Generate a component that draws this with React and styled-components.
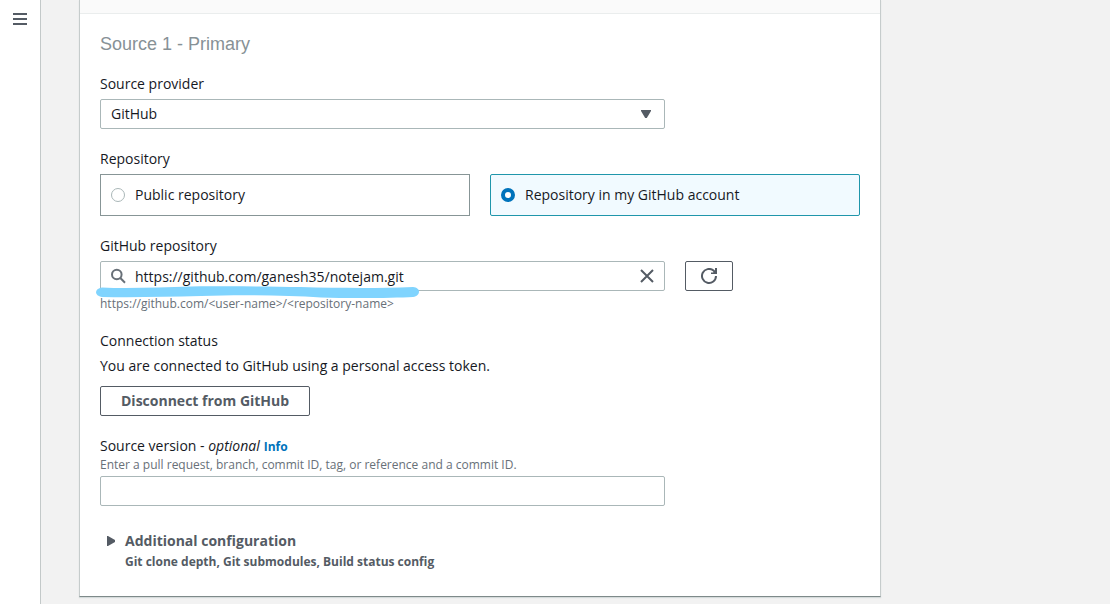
import React, { useState } from "react";
import styled, { createGlobalStyle } from "styled-components";

const GlobalStyle = createGlobalStyle`
  * { box-sizing: border-box; }
  body {
    margin: 0;
    background: #f2f2f2;
    color: #16191f;
    font: 14px/22px "Open Sans", "Noto Sans", sans-serif;
  }
  button, input, select { font: inherit; color: inherit; margin: 0; }
`;

const Page = styled.div`
  display: flex;
  min-height: 100vh;
`;

const SideRail = styled.nav`
  flex: 0 0 41px;
  display: flex;
  align-items: flex-start;
  justify-content: center;
  padding-top: 8px;
  background: #fff;
  border-right: 1px solid #c3c9c9;
`;

const IconButton = styled.button`
  display: flex;
  align-items: center;
  justify-content: center;
  width: 22px;
  height: 22px;
  padding: 0;
  border: 0;
  background: none;
  color: #545b64;
  cursor: pointer;
`;

const Main = styled.main`
  flex: 1;
  min-width: 0;
  padding: 0 38px 7px;
`;

const Panel = styled.section`
  max-width: 802px;
  background: #fff;
  border: 1px solid #c6cccc;
  border-top: 0;
  border-bottom-color: #7e8a8a;
  box-shadow: 0 1px 1px #d5dbdb;
`;

const PanelHeader = styled.header`
  height: 14px;
  background: #fafafa;
  border-bottom: 1px solid #eaeded;
`;

const Form = styled.form`
  padding: 19px 20px 24px;
`;

const Title = styled.h2`
  margin: 0 0 18px;
  font: 400 18px/22px "Liberation Sans", Arial, sans-serif;
  color: #879196;
`;

const Field = styled.div`
  margin-bottom: ${(p) => p.$gap || 19}px;
`;

const FieldSet = styled.fieldset`
  min-width: 0;
  margin: 0 0 19px;
  padding: 0;
  border: 0;
`;

const LabelRow = styled.div`
  display: flex;
  align-items: baseline;
  gap: 4px;
  height: 22px;
`;

const Label = styled.label`
  display: inline-block;
  vertical-align: top;
`;

const Legend = styled.legend`
  padding: 0;
`;

const Text = styled.p`
  margin: 0;
  padding-bottom: ${(p) => p.$gap || 0}px;
`;

const Hint = styled.div`
  padding-top: ${(p) => p.$top || 0}px;
  font-size: 12px;
  line-height: 16px;
  color: #687078;
`;

const Columns = styled.div`
  display: grid;
  grid-template-columns: repeat(4, minmax(0, 1fr));
  gap: 20px;
  padding-top: ${(p) => p.$top || 0}px;
`;

const Control = styled.div`
  grid-column: span 3;
  position: relative;
  display: flex;
  align-items: center;
  height: 30px;
  padding: 0 6px 0 10px;
  background: #fff;
  border: 1px solid #aab7b8;
  border-radius: 2px;
  color: #545b64;
`;

const Select = styled.select`
  position: absolute;
  inset: 0;
  width: 100%;
  padding: 0 40px 0 10px;
  appearance: none;
  border: 0;
  background: none;
  color: #16191f;
`;

const SelectArrow = styled.svg`
  margin-left: auto;
  margin-right: 6px;
`;

const TextInput = styled.input`
  flex: 1;
  min-width: 0;
  height: 28px;
  padding: 0 ${(p) => (p.$icon ? 8 : 0)}px;
  border: 0;
  outline: 0;
  background: none;
  color: #16191f;
`;

const Marker = styled.svg`
  position: absolute;
  left: -5px;
  top: 24px;
  pointer-events: none;
`;

const Tiles = styled.div`
  display: grid;
  grid-template-columns: 1fr 1fr;
  gap: 20px;
  padding-top: 4px;
`;

const Tile = styled.label`
  display: flex;
  align-items: center;
  gap: 10px;
  height: 42px;
  padding: 0 10px;
  border: 1px solid ${(p) => (p.$selected ? "#1f96ab" : "#879596")};
  border-radius: ${(p) => (p.$selected ? 2 : 0)}px;
  background: ${(p) => (p.$selected ? "#f1faff" : "#fff")};
`;

const Radio = styled.input`
  appearance: none;
  width: 14px;
  height: 14px;
  border: 1px solid #aab7b8;
  border-radius: 50%;
  background: #fff;
  &:checked { border: 4px solid #0073bb; }
`;

const Button = styled.button`
  display: inline-flex;
  align-items: center;
  justify-content: center;
  justify-self: start;
  height: 30px;
  padding: 0 ${(p) => (p.$icon ? 15 : 20)}px;
  border: 1px solid #545b64;
  border-radius: 2px;
  background: #fff;
  color: #545b64;
  font-weight: 700;
  cursor: pointer;
`;

const InfoLink = styled.a`
  font-size: 12px;
  font-weight: 700;
  color: #0073bb;
  text-decoration: none;
`;

const Expander = styled.button`
  display: grid;
  grid-template-columns: 18px auto;
  align-items: center;
  padding: 0 0 0 7px;
  border: 0;
  background: none;
  color: #545b64;
  font-weight: 700;
  text-align: left;
  cursor: pointer;
`;

const ExpanderNote = styled.span`
  grid-column: 2;
  font-size: 12px;
  line-height: 20px;
`;

export default function App() {
  const [kind, setKind] = useState("mine");
  const [url, setUrl] = useState("https://github.com/ganesh35/notejam.git");

  return (
    <Page>
      <GlobalStyle />
      <SideRail aria-label="Main">
        <IconButton type="button" aria-label="Open navigation">
          <svg width="14" height="12" viewBox="0 0 14 12" fill="currentColor">
            <path d="M0 0h14v2H0zM0 5h14v2H0zM0 10h14v2H0z" />
          </svg>
        </IconButton>
      </SideRail>
      <Main>
        <Panel>
          <PanelHeader />
          <Form onSubmit={(e) => e.preventDefault()}>
            <Title>Source 1 - Primary</Title>

            <Field>
              <Label htmlFor="provider">Source provider</Label>
              <Columns $top={4}>
                <Control>
                  <Select id="provider">
                    <option>GitHub</option>
                  </Select>
                  <SelectArrow width="12" height="8" viewBox="0 0 12 8" fill="currentColor">
                    <path d="M1 0h10v1L6.8 8H5.2L1 1z" />
                  </SelectArrow>
                </Control>
              </Columns>
            </Field>

            <FieldSet>
              <Legend>Repository</Legend>
              <Tiles>
                <Tile $selected={kind === "public"}>
                  <Radio type="radio" name="kind" checked={kind === "public"} onChange={() => setKind("public")} />
                  Public repository
                </Tile>
                <Tile $selected={kind === "mine"}>
                  <Radio type="radio" name="kind" checked={kind === "mine"} onChange={() => setKind("mine")} />
                  Repository in my GitHub account
                </Tile>
              </Tiles>
            </FieldSet>

            <Field $gap={18}>
              <Label htmlFor="repo">GitHub repository</Label>
              <Columns $top={4}>
                <Control>
                  <svg width="16" height="16" viewBox="0 0 16 16" fill="none" stroke="#687078" strokeWidth="2">
                    <circle cx="5.800" cy="6.500" r="4.800" />
                    <path d="M9.300 10l4.700 4.700" />
                  </svg>
                  <TextInput id="repo" $icon value={url} onChange={(e) => setUrl(e.target.value)} />
                  <IconButton type="button" aria-label="Clear" onClick={() => setUrl("")}>
                    <svg width="14" height="14" viewBox="0 0 14 14" fill="none" stroke="currentColor" strokeWidth="2">
                      <path d="M1 1l12 12M13 1L1 13" />
                    </svg>
                  </IconButton>
                  <Marker width="324" height="13" viewBox="0 0 324 13" fill="#80d4fe">
                    <path d="M6 1.5C35 3 65 1 95 .5C140 0 175 .5 205 1C240 2 280 2.5 317 1C325 1.500 325 10 317 11C300 12 255 12.500 225 11.500C190 9.500 150 8.500 105 10C70 11 35 11.500 6 11C-2 10 -2 2.500 6 1.500z" />
                  </Marker>
                </Control>
                <Button type="button" $icon aria-label="Refresh">
                  <svg width="16" height="16" viewBox="0 0 16 16" fill="none" stroke="currentColor" strokeWidth="2">
                    <path d="M15 8a7 7 0 1 1-2.500-5.400L14 4" />
                    <path d="M16 0v6h-6V4.500h2L14 3V0z" fill="currentColor" stroke="none" />
                  </svg>
                </Button>
              </Columns>
              <Hint $top={5}>https://github.com/&lt;user-name&gt;/&lt;repository-name&gt;</Hint>
            </Field>

            <Field>
              <Text $gap={3}>Connection status</Text>
              <Text $gap={9}>You are connected to GitHub using a personal access token.</Text>
              <Button type="button">Disconnect from GitHub</Button>
            </Field>

            <Field $gap={24}>
              <LabelRow>
                <Label htmlFor="version">
                  Source version - <i>optional</i>
                </Label>
                <InfoLink href="#info">Info</InfoLink>
              </LabelRow>
              <Hint>Enter a pull request, branch, commit ID, tag, or reference and a commit ID.</Hint>
              <Columns $top={3}>
                <Control>
                  <TextInput id="version" />
                </Control>
              </Columns>
            </Field>

            <Expander type="button" aria-expanded="false">
              <svg width="8" height="10" viewBox="0 0 8 10" fill="currentColor">
                <path d="M0 0h1l7 4v2l-7 4H0z" />
              </svg>
              <span>Additional configuration</span>
              <ExpanderNote>Git clone depth, Git submodules, Build status config</ExpanderNote>
            </Expander>
          </Form>
        </Panel>
      </Main>
    </Page>
  );
}
